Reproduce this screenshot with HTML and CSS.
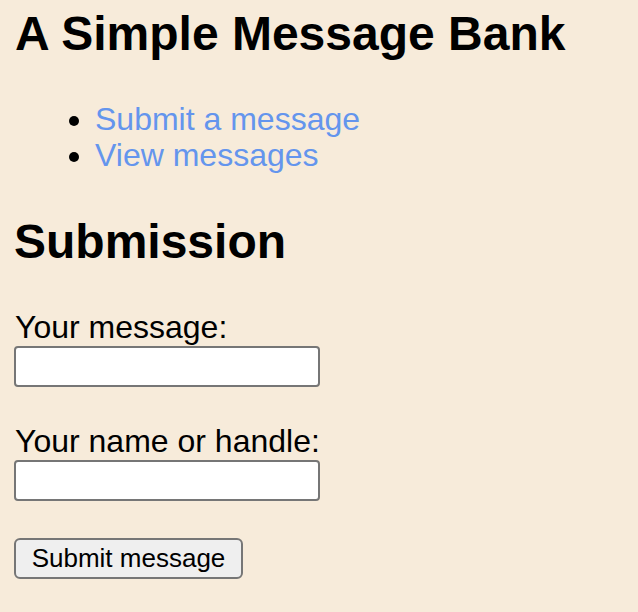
FILE: index.html
```html
<!DOCTYPE html>
<html lang="en">
<head>
<meta charset="utf-8">
<title>A Simple Message Bank</title>
<link rel="stylesheet" href="styles.css">
</head>
<body>
<section class="page">
  <h1 class="title">A Simple Message Bank</h1>
  <ul class="nav">
    <li><a class="nav-link" href="#submit">Submit a message</a></li>
    <li><a class="nav-link" href="#view">View messages</a></li>
  </ul>
  <h2 class="section-title">Submission</h2>
  <form class="form">
    <label class="field">
      <span class="label">Your message:</span>
      <input class="input" type="text" name="message">
    </label>
    <label class="field">
      <span class="label">Your name or handle:</span>
      <input class="input" type="text" name="handle">
    </label>
    <div class="actions">
      <button class="btn" type="submit">Submit message</button>
    </div>
  </form>
</section>
</body>
</html>
```
FILE: styles.css
```css
html, body {
  background: #f7ebda;
}
body {
  margin: 0;
  font-family: "Liberation Sans", Arial, Helvetica, sans-serif;
  font-size: 32px;
  color: #000;
}
.page {
  padding: 6px 14px 0 14px;
}
.title {
  margin: 0 0 40px 1px;
  font-size: 48px;
  line-height: 55px;
  font-weight: bold;
}
.nav {
  margin: 0;
  padding-left: 81px;
  line-height: 36px;
}
.nav-link {
  color: #6495ed;
  text-decoration: none;
}
.section-title {
  margin: 41px 0 0 0;
  font-size: 48px;
  line-height: 55px;
  font-weight: bold;
}
.form {
  display: flex;
  flex-direction: column;
  align-items: flex-start;
  margin-top: 40px;
}
.field {
  display: flex;
  flex-direction: column;
  align-items: flex-start;
  gap: 1px;
  margin-bottom: 36px;
}
.label {
  line-height: 36px;
  padding-left: 1px;
}
.input {
  box-sizing: border-box;
  width: 306px;
  height: 41px;
  margin: 0;
  border: 2px solid #767676;
  border-radius: 4px;
  background: #fff;
  font-size: 26px;
  padding: 2px 6px;
}
.actions {
  margin-top: 1px;
}
.btn {
  box-sizing: border-box;
  width: 229px;
  height: 41px;
  margin: 0;
  padding: 0;
  border: 2px solid #767676;
  border-radius: 6px;
  background: #efefef;
  color: #000;
  font-family: "Liberation Sans", Arial, Helvetica, sans-serif;
  font-size: 26px;
  line-height: 37px;
  text-align: center;
}
```
